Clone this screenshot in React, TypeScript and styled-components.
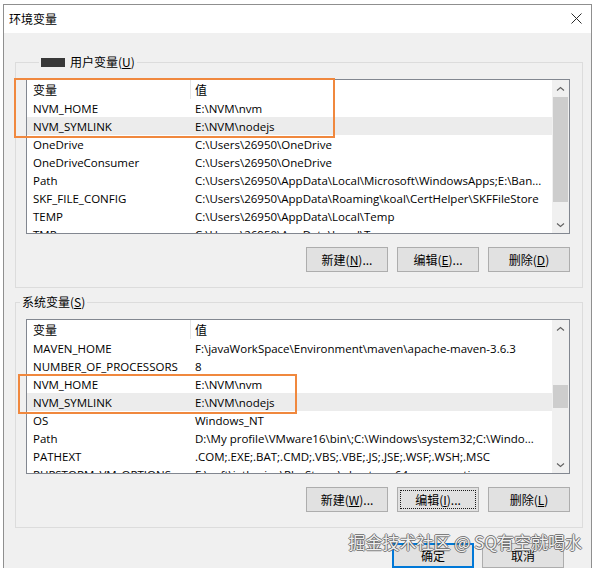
import React from 'react';
import styled, { createGlobalStyle } from 'styled-components';

const GlobalStyle = createGlobalStyle`
  html, body {
    margin: 0;
    padding: 0;
    background: #ffffff;
  }
  body {
    font-family: "Open Sans", "Noto Sans CJK SC", sans-serif;
    font-size: 11.5px;
    color: #000;
  }
`;

type Row = [string, string];

const userVars: Row[] = [
  ['NVM_HOME', 'E:\\NVM\\nvm'],
  ['NVM_SYMLINK', 'E:\\NVM\\nodejs'],
  ['OneDrive', 'C:\\Users\\26950\\OneDrive'],
  ['OneDriveConsumer', 'C:\\Users\\26950\\OneDrive'],
  ['Path', 'C:\\Users\\26950\\AppData\\Local\\Microsoft\\WindowsApps;E:\\Ban...'],
  ['SKF_FILE_CONFIG', 'C:\\Users\\26950\\AppData\\Roaming\\koal\\CertHelper\\SKFFileStore'],
  ['TEMP', 'C:\\Users\\26950\\AppData\\Local\\Temp'],
  ['TMP', 'C:\\Users\\26950\\AppData\\Local\\Temp'],
];

const systemVars: Row[] = [
  ['MAVEN_HOME', 'F:\\javaWorkSpace\\Environment\\maven\\apache-maven-3.6.3'],
  ['NUMBER_OF_PROCESSORS', '8'],
  ['NVM_HOME', 'E:\\NVM\\nvm'],
  ['NVM_SYMLINK', 'E:\\NVM\\nodejs'],
  ['OS', 'Windows_NT'],
  ['Path', 'D:\\My profile\\VMware16\\bin\\;C:\\Windows\\system32;C:\\Windo...'],
  ['PATHEXT', '.COM;.EXE;.BAT;.CMD;.VBS;.VBE;.JS;.JSE;.WSF;.WSH;.MSC'],
  ['PHPSTORM_VM_OPTIONS', 'F:\\soft\\jetbrains\\PhpStorm\\phpstorm64.exe.vmoptions'],
];

const Screen = styled.div`
  position: relative;
  width: 597px;
  height: 568px;
  overflow: hidden;
`;

const Dialog = styled.div`
  margin: 4px 0 0 3px;
  width: 587px;
  height: 600px;
  border: 1px solid #8f8f8f;
  display: flex;
  flex-direction: column;
  background: #f0f0f0;
`;

const TitleBar = styled.div`
  height: 28px;
  background: #ffffff;
  display: flex;
  align-items: center;
  justify-content: space-between;
  padding: 0 9px 0 5px;
`;

const Title = styled.span`
  font-family: "Noto Sans CJK SC", sans-serif;
  font-size: 12px;
  line-height: 14px;
`;

const CloseIcon = styled.svg`
  width: 11px;
  height: 11px;
  margin-top: -1px;
`;

const Body = styled.div`
  flex: 1;
  display: flex;
  flex-direction: column;
  padding: 22px 8px 0 11px;
`;

const Group = styled.fieldset<{ $gap?: number }>`
  margin: ${({ $gap }) => $gap ?? 0}px 0 0 0;
  padding: 10px 12px 15px 10px;
  border: 1px solid #dcdcdc;
  min-width: 0;
`;

const Legend = styled.legend<{ $shift: number }>`
  margin-left: ${({ $shift }) => $shift}px;
  padding: 0 2px;
  font-family: "Noto Sans CJK SC", sans-serif;
  font-size: 12px;
  line-height: 14px;
  display: flex;
  align-items: center;
  gap: 5px;
`;

const Redacted = styled.span`
  display: inline-block;
  width: 24px;
  height: 9px;
  background: #383838;
`;

const ListWrap = styled.div`
  position: relative;
`;

const List = styled.div`
  height: 155px;
  box-sizing: border-box;
  border: 1px solid #828790;
  background: #ffffff;
  display: flex;
  overflow: hidden;
`;

const Rows = styled.div`
  flex: 1;
  min-width: 0;
  overflow: hidden;
`;

const RowLine = styled.div<{ $selected?: boolean; $head?: boolean }>`
  display: grid;
  grid-template-columns: 164px 1fr;
  height: ${({ $head }) => ($head ? 19 : 18)}px;
  align-items: center;
  background: ${({ $selected }) => ($selected ? '#ececec' : 'transparent')};
  white-space: nowrap;
`;

const NameCell = styled.div<{ $head?: boolean }>`
  height: 100%;
  display: flex;
  align-items: center;
  padding-left: 6px;
  box-sizing: border-box;
  border-right: 1px solid ${({ $head }) => ($head ? '#e5e5e5' : 'transparent')};
  overflow: hidden;
  font-family: ${({ $head }) => ($head ? '"Noto Sans CJK SC", sans-serif' : 'inherit')};
  font-size: ${({ $head }) => ($head ? '12px' : 'inherit')};
`;

const ValueCell = styled.div<{ $head?: boolean }>`
  padding-left: 4px;
  overflow: hidden;
  font-family: ${({ $head }) => ($head ? '"Noto Sans CJK SC", sans-serif' : 'inherit')};
  font-size: ${({ $head }) => ($head ? '12px' : 'inherit')};
`;

const ScrollBar = styled.div`
  width: 17px;
  background: #f0f0f0;
  display: flex;
  flex-direction: column;
`;

const ArrowButton = styled.div`
  height: 17px;
  display: flex;
  align-items: center;
  justify-content: center;
`;

const Track = styled.div`
  flex: 1;
  display: flex;
  justify-content: center;
`;

const Thumb = styled.div<{ $top: number; $size: number }>`
  margin-top: ${({ $top }) => $top}px;
  width: 15px;
  height: ${({ $size }) => $size}px;
  background: #cdcdcd;
`;

const Mark = styled.div<{ $x: number; $y: number; $w: number; $h: number }>`
  position: absolute;
  left: ${({ $x }) => $x}px;
  top: ${({ $y }) => $y}px;
  width: ${({ $w }) => $w}px;
  height: ${({ $h }) => $h}px;
  box-sizing: border-box;
  border: 2px solid #f0883e;
  pointer-events: none;
`;

const ButtonRow = styled.div<{ $pad?: number }>`
  display: flex;
  justify-content: flex-end;
  gap: 9px;
  margin-top: 13px;
  padding-right: ${({ $pad }) => $pad ?? 0}px;
`;

const Button = styled.button<{ $default?: boolean; $focused?: boolean }>`
  width: 82px;
  height: 25px;
  box-sizing: border-box;
  padding: 0;
  background: #e1e1e1;
  border: 1px solid ${({ $default }) => ($default ? '#0078d7' : '#adadad')};
  box-shadow: ${({ $default }) => ($default ? 'inset 0 0 0 1px #0078d7' : 'none')};
  outline: ${({ $focused }) => ($focused ? '1px dotted #1a1a1a' : 'none')};
  outline-offset: -4px;
  font-family: "Noto Sans CJK SC", sans-serif;
  font-size: 12px;
  color: #000;
  line-height: 14px;
`;

const Footer = styled.div`
  display: flex;
  justify-content: flex-end;
  gap: 8px;
  margin-top: 15px;
  padding-right: 19px;
`;

const Watermark = styled.div`
  position: absolute;
  right: 15px;
  top: 532px;
  font-family: "Noto Sans CJK SC", sans-serif;
  font-size: 17px;
  line-height: 20px;
  color: rgba(255, 255, 255, 0.92);
  white-space: nowrap;
  text-shadow:
    1px 0 0 rgba(90, 90, 90, 0.75),
    -1px 0 0 rgba(90, 90, 90, 0.75),
    0 1px 0 rgba(90, 90, 90, 0.75),
    0 -1px 0 rgba(90, 90, 90, 0.75);
`;

const Chevron: React.FC<{ down?: boolean }> = ({ down }) => (
  <svg width="9" height="6" viewBox="0 0 9 6">
    <path
      d={down ? 'M1 1.5 L4.5 4.5 L8 1.5' : 'M1 4.5 L4.5 1.5 L8 4.5'}
      fill="none"
      stroke="#606060"
      strokeWidth="1.1"
    />
  </svg>
);

interface VarListProps {
  rows: Row[];
  selected: number;
  thumbTop: number;
  thumbSize: number;
}

const VarList: React.FC<VarListProps> = ({ rows, selected, thumbTop, thumbSize }) => (
  <List>
    <Rows>
      <RowLine $head>
        <NameCell $head>变量</NameCell>
        <ValueCell $head>值</ValueCell>
      </RowLine>
      {rows.map(([name, value], i) => (
        <RowLine key={name} $selected={i === selected}>
          <NameCell>{name}</NameCell>
          <ValueCell>{value}</ValueCell>
        </RowLine>
      ))}
    </Rows>
    <ScrollBar>
      <ArrowButton>
        <Chevron />
      </ArrowButton>
      <Track>
        <Thumb $top={thumbTop} $size={thumbSize} />
      </Track>
      <ArrowButton>
        <Chevron down />
      </ArrowButton>
    </ScrollBar>
  </List>
);

export default function App() {
  return (
    <Screen>
      <GlobalStyle />
      <Dialog>
        <TitleBar>
          <Title>环境变量</Title>
          <CloseIcon viewBox="0 0 11 11">
            <path d="M0.5 0.5 L10.5 10.5 M10.5 0.5 L0.5 10.5" stroke="#2b2b2b" strokeWidth="1" />
          </CloseIcon>
        </TitleBar>
        <Body>
          <Group>
            <Legend $shift={13}>
              <Redacted />
              <span>
                用户变量(<u>U</u>)
              </span>
            </Legend>
            <ListWrap>
              <VarList rows={userVars} selected={1} thumbTop={0} thumbSize={105} />
              <Mark $x={-12} $y={-1} $w={321} $h={60} />
            </ListWrap>
            <ButtonRow>
              <Button>
                新建(<u>N</u>)...
              </Button>
              <Button>
                编辑(<u>E</u>)...
              </Button>
              <Button>
                删除(<u>D</u>)
              </Button>
            </ButtonRow>
          </Group>
          <Group $gap={7}>
            <Legend $shift={-6}>
              <span>
                系统变量(<u>S</u>)
              </span>
            </Legend>
            <ListWrap>
              <VarList rows={systemVars} selected={3} thumbTop={48} thumbSize={23} />
              <Mark $x={-8} $y={55} $w={279} $h={40} />
            </ListWrap>
            <ButtonRow>
              <Button>
                新建(<u>W</u>)...
              </Button>
              <Button $focused>
                编辑(<u>I</u>)...
              </Button>
              <Button>
                删除(<u>L</u>)
              </Button>
            </ButtonRow>
          </Group>
          <Footer>
            <Button $default>确定</Button>
            <Button>取消</Button>
          </Footer>
        </Body>
      </Dialog>
      <Watermark>掘金技术社区 @ SQ有空就喝水</Watermark>
    </Screen>
  );
}
